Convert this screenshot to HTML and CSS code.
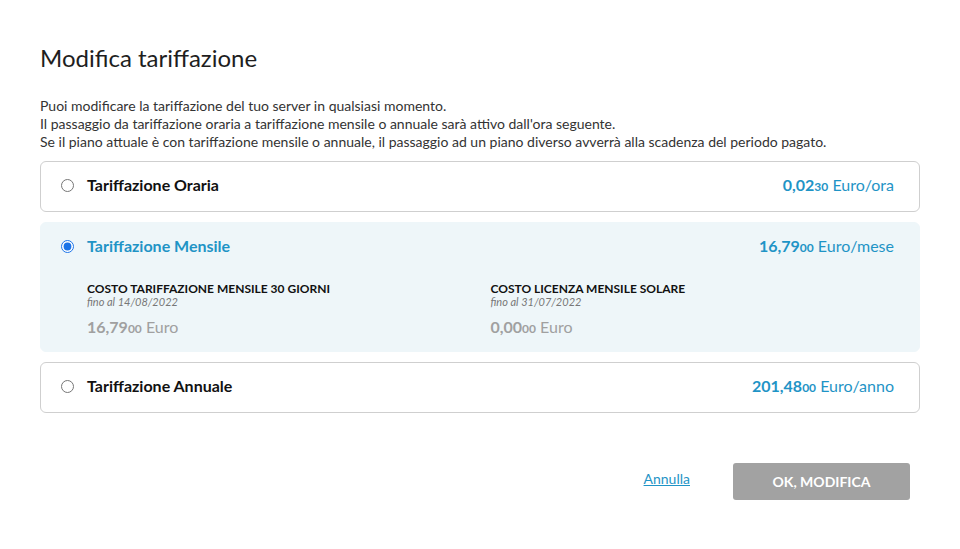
FILE: index.html
```html
<!DOCTYPE html>
<html lang="it">
<head>
<meta charset="utf-8">
<title>Modifica tariffazione</title>
<link rel="stylesheet" href="styles.css">
</head>
<body>
<div class="dialog">
  <h1 class="title">Modifica tariffazione</h1>
  <p class="intro">Puoi modificare la tariffazione del tuo server in qualsiasi momento.<br>Il passaggio da tariffazione oraria a tariffazione mensile o annuale sarà attivo dall'ora seguente.<br>Se il piano attuale è con tariffazione mensile o annuale, il passaggio ad un piano diverso avverrà alla scadenza del periodo pagato.</p>

  <div class="plans">
    <label class="plan">
      <div class="plan-head">
        <input type="radio" name="plan" class="radio">
        <span class="plan-name">Tariffazione Oraria</span>
        <span class="price"><b>0,02</b><small>30</small> Euro/ora</span>
      </div>
    </label>

    <label class="plan plan-selected">
      <div class="plan-head">
        <input type="radio" name="plan" class="radio" checked>
        <span class="plan-name">Tariffazione Mensile</span>
        <span class="price"><b>16,79</b><small>00</small> Euro/mese</span>
      </div>
      <div class="plan-details">
        <div class="detail">
          <div class="detail-title">COSTO TARIFFAZIONE MENSILE 30 GIORNI</div>
          <div class="detail-date">fino al 14/08/2022</div>
          <div class="detail-price"><b>16,79</b><small>00</small> Euro</div>
        </div>
        <div class="detail">
          <div class="detail-title">COSTO LICENZA MENSILE SOLARE</div>
          <div class="detail-date">fino al 31/07/2022</div>
          <div class="detail-price"><b>0,00</b><small>00</small> Euro</div>
        </div>
      </div>
    </label>

    <label class="plan">
      <div class="plan-head">
        <input type="radio" name="plan" class="radio">
        <span class="plan-name">Tariffazione Annuale</span>
        <span class="price"><b>201,48</b><small>00</small> Euro/anno</span>
      </div>
    </label>
  </div>

  <div class="actions">
    <a href="#" class="cancel">Annulla</a>
    <button class="confirm" type="button">OK, MODIFICA</button>
  </div>
</div>
</body>
</html>
```
FILE: styles.css
```css
* { box-sizing: border-box; }
html, body { margin: 0; padding: 0; background: #fff; }
body {
  font-family: Lato, "Open Sans", "Liberation Sans", sans-serif;
  color: #222;
}
.dialog {
  padding: 43px 40px 0 40px;
  width: 960px;
}
.title {
  margin: 0;
  font-size: 24px;
  line-height: 30px;
  font-weight: 400;
  color: #1e1e1e;
}
.intro {
  margin: 24px 0 10px;
  font-size: 14px;
  line-height: 18px;
  color: #333;
}
.plans {
  display: flex;
  flex-direction: column;
  gap: 10px;
}
.plan {
  display: block;
  border: 1px solid #cfcfcf;
  border-radius: 6px;
  background: #fff;
  cursor: pointer;
}
.plan-selected {
  border-color: #eef6f9;
  background: #eef6f9;
}
.plan-head {
  display: flex;
  align-items: center;
  height: 49px;
  padding: 0 25px 5px 20px;
}
.radio {
  width: 13px;
  height: 13px;
  margin: 2px 13px 0 0;
  accent-color: #1a73e8;
}
.plan-name {
  font-size: 16px;
  font-weight: 700;
  color: #111;
  flex: 1;
}
.plan-selected .plan-name { color: #1f94c6; }
.price {
  font-size: 16px;
  color: #1f94c6;
}
.price b, .detail-price b { font-weight: 700; }
.price small, .detail-price small {
  font-size: 12px;
  font-weight: 700;
}
.plan-details {
  display: grid;
  grid-template-columns: 1fr 1fr;
  padding: 10px 25px 12px 46px;
}
.detail-title {
  font-size: 12px;
  line-height: 14px;
  font-weight: 700;
  color: #111;
}
.detail-date {
  font-size: 11px;
  line-height: 12px;
  font-style: italic;
  color: #777;
}
.detail-price {
  margin-top: 9px;
  font-size: 16px;
  line-height: 20px;
  color: #a0a0a0;
}
.actions {
  display: flex;
  justify-content: flex-end;
  align-items: center;
  gap: 43px;
  margin-top: 50px;
  padding-right: 10px;
}
.cancel {
  margin-bottom: 6px;
  font-size: 14px;
  color: #1f94c6;
  text-decoration: underline;
}
.confirm {
  width: 177px;
  height: 37px;
  border: none;
  border-radius: 3px;
  background: #a2a2a2;
  color: #fff;
  font-family: inherit;
  font-size: 14px;
  font-weight: 700;
}
```
